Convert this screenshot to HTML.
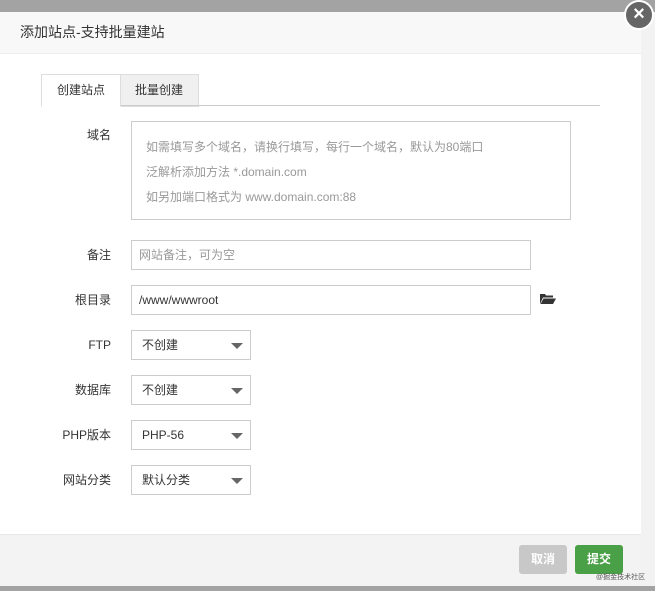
<!DOCTYPE html>
<html><head><meta charset="utf-8"><style>
body{margin:0;width:655px;height:591px;background:#a3a3a3;position:relative;overflow:hidden;font-family:"Liberation Sans","Noto Sans CJK SC",sans-serif;font-size:12px;color:#333}
.strip{position:absolute;left:641px;top:12px;width:14px;height:574px;background:#f2f2f2}
.dlg{position:absolute;left:0;top:12px;width:641px;height:574px;background:#fff}
.hd{height:41px;background:#f8f8f8;border-bottom:1px solid #eee;font-size:14px;line-height:41px;padding-left:20px;color:#333}
.ft{position:absolute;left:0;bottom:0;width:641px;height:51px;background:#f3f3f3;border-top:1px solid #e8e8e8}
.btn{position:absolute;top:10px;width:48px;height:29px;border-radius:3px;color:#fff;font-size:12px;text-align:center;line-height:29px;font-weight:bold}
.close{position:absolute;left:624px;top:0px;width:26px;height:26px;border-radius:50%;background:#666;border:2px solid #fff;color:#fff;text-align:center;line-height:25px;font-size:20px;font-weight:bold}
.tab{position:absolute;top:62px;height:31px;line-height:31px;text-align:center;width:78px;border:1px solid #ddd;font-size:12px}
.lbl{position:absolute;left:40px;width:71px;text-align:right;font-size:12px;color:#333;line-height:14px}
.in{position:absolute;left:131px;border:1px solid #ccc;box-sizing:border-box;padding-left:7px;font-size:12px}
.sel:after{content:"";position:absolute;right:7px;top:12px;border-left:6px solid transparent;border-right:6px solid transparent;border-top:6px solid #666}
</style></head><body>
<div class="strip"></div>
<div class="dlg">
<div class="hd">添加站点-支持批量建站</div>
<div class="tab" style="left:41px;background:#fff;border-bottom-color:#fff;z-index:2">创建站点</div>
<div class="tab" style="left:120px;background:#f0f0f0;border-left:none">批量创建</div>
<div style="position:absolute;left:41px;top:93px;width:559px;border-top:1px solid #ccc"></div>
<div class="lbl" style="top:116px">域名</div>
<div class="in" style="top:109px;width:440px;height:99px;padding:13px 14px;color:#999;line-height:25px">如需填写多个域名，请换行填写，每行一个域名，默认为80端口<br>泛解析添加方法 *.domain.com<br>如另加端口格式为 www.domain.com:88</div>
<div class="lbl" style="top:236px">备注</div>
<div class="in" style="top:228px;width:400px;height:30px;line-height:28px;color:#999">网站备注，可为空</div>
<div class="lbl" style="top:281px">根目录</div>
<div class="in" style="top:273px;width:400px;height:30px;line-height:28px;color:#333">/www/wwwroot</div>
<svg style="position:absolute;left:540px;top:281px" width="16" height="12" viewBox="0 0 16 12"><path d="M0 1h5l1 1.5h7v2H3L0 11z" fill="#333"/><path d="M3.5 5.5H16L13 11H0.5z" fill="#333"/></svg>
<div class="lbl" style="top:326px">FTP</div>
<div class="in sel" style="top:318px;width:120px;height:30px;line-height:28px;padding-left:10px">不创建</div>
<div class="lbl" style="top:371px">数据库</div>
<div class="in sel" style="top:363px;width:120px;height:30px;line-height:28px;padding-left:10px">不创建</div>
<div class="lbl" style="top:416px">PHP版本</div>
<div class="in sel" style="top:408px;width:120px;height:30px;line-height:28px;padding-left:10px">PHP-56</div>
<div class="lbl" style="top:461px">网站分类</div>
<div class="in sel" style="top:453px;width:120px;height:30px;line-height:28px;padding-left:10px">默认分类</div>
<div class="ft">
<div class="btn" style="left:519px;background:#c8c8c8">取消</div>
<div class="btn" style="left:575px;background:#4aa046">提交</div>
<div style="position:absolute;left:596px;top:37px;font-size:7px;color:#555;white-space:nowrap">@掘金技术社区</div>
</div>
</div>
<div class="close">×</div>
</body></html>
